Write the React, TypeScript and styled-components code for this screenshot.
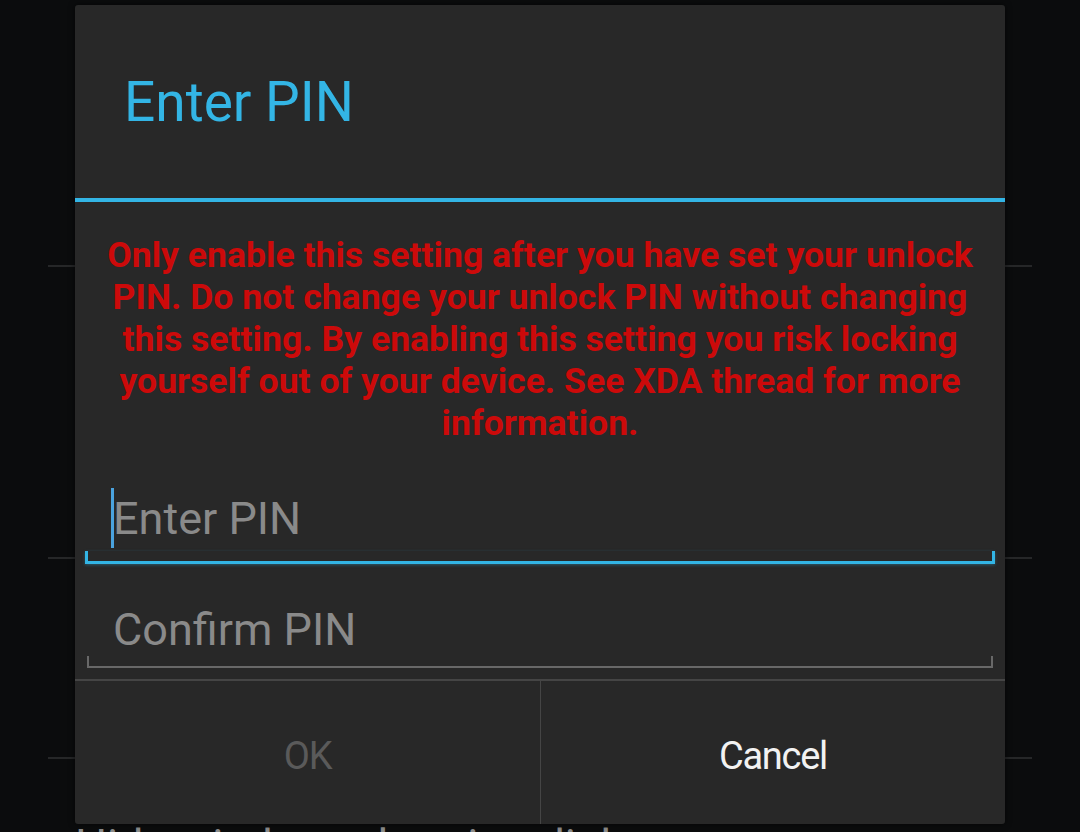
import styled, { createGlobalStyle } from 'styled-components'

const GlobalStyle = createGlobalStyle`
  html, body {
    margin: 0;
    padding: 0;
    background: #0b0c0d;
  }
  body {
    font-family: Roboto, 'Noto Sans', 'Liberation Sans', sans-serif;
  }
`

const HOLO_BLUE = '#33b5e5'

const Screen = styled.div`
  position: relative;
  width: 1080px;
  height: 832px;
  overflow: hidden;
  background: #0b0c0d;
`

const SettingsList = styled.div`
  display: flex;
  flex-direction: column;
  padding: 0 48px;
`

const SettingsRow = styled.div<{ $height: number }>`
  height: ${(p) => p.$height}px;
  border-bottom: 2px solid #262728;
  box-sizing: border-box;
`

const SettingsLabel = styled.div`
  padding: 60px 0 0 27px;
  font-size: 45px;
  color: #8c8c8c;
  white-space: nowrap;
`

const Dialog = styled.div`
  position: absolute;
  top: 5px;
  left: 75px;
  width: 930px;
  height: 819px;
  display: flex;
  flex-direction: column;
  background: #282828;
  border-radius: 3px;
  box-shadow: 0 0 6px rgba(0, 0, 0, 0.6);
`

const TitleBar = styled.div`
  height: 197px;
  display: flex;
  align-items: center;
  padding: 0 0 0 49px;
  border-bottom: 4px solid ${HOLO_BLUE};
  box-sizing: border-box;
  flex-shrink: 0;
`

const Title = styled.h1`
  margin: 0;
  font-size: 55px;
  font-weight: 400;
  color: ${HOLO_BLUE};
`

const Warning = styled.p`
  margin: 32px 0 0;
  padding: 0;
  text-align: center;
  font-size: 35.6px;
  line-height: 42px;
  font-weight: 700;
  color: #cc0a0a;
  white-space: nowrap;
`

const Fields = styled.div`
  display: flex;
  flex-direction: column;
  margin-top: 44px;
  padding: 0 10px;
`

const Field = styled.div<{ $focused?: boolean }>`
  position: relative;
  height: ${(p) => (p.$focused ? 76 : 110)}px;
  display: flex;
  align-items: ${(p) => (p.$focused ? 'flex-start' : 'center')};
  padding: ${(p) => (p.$focused ? '0 0 0 26px' : '20px 0 0 28px')};
  box-sizing: border-box;
  font-size: 45px;
  color: #8a8a8a;

  &::after {
    content: '';
    position: absolute;
    left: ${(p) => (p.$focused ? 0 : 2)}px;
    right: ${(p) => (p.$focused ? 0 : 2)}px;
    bottom: ${(p) => (p.$focused ? 0 : 6)}px;
    height: 10px;
    border: ${(p) => (p.$focused ? `3px solid ${HOLO_BLUE}` : '2px solid #686868')};
    border-top: none;
    box-shadow: ${(p) => (p.$focused ? '0 1px 3px rgba(51,181,229,0.35)' : 'none')};
  }
`

const Cursor = styled.span`
  display: inline-block;
  width: 3px;
  height: 60px;
  margin-right: -1px;
  background: #4aa3df;
`

const FieldText = styled.span`
  line-height: 60px;
  margin-top: 1px;
`

const ButtonBar = styled.div`
  margin-top: auto;
  height: 143px;
  display: grid;
  grid-template-columns: 1fr 1fr;
  border-top: 2px solid #454545;
`

const DialogButton = styled.button<{ $disabled?: boolean }>`
  border: none;
  background: transparent;
  font-family: Roboto, 'Noto Sans', 'Liberation Sans', sans-serif;
  font-size: 38px;
  letter-spacing: -1.3px;
  color: ${(p) => (p.$disabled ? '#5a5a5a' : '#f2f2f2')};
  padding: 6px 0 0;

  & + & {
    border-left: 1px solid #454545;
  }
`

export default function App() {
  return (
    <Screen>
      <GlobalStyle />
      <SettingsList>
        <SettingsRow $height={267} />
        <SettingsRow $height={292} />
        <SettingsRow $height={200} />
        <SettingsLabel>Hide wireless charging dialog</SettingsLabel>
      </SettingsList>

      <Dialog>
        <TitleBar>
          <Title>Enter PIN</Title>
        </TitleBar>
        <Warning>
          Only enable this setting after you have set your unlock
          <br />
          PIN. Do not change your unlock PIN without changing
          <br />
          this setting. By enabling this setting you risk locking
          <br />
          yourself out of your device. See XDA thread for more
          <br />
          information.
        </Warning>
        <Fields>
          <Field $focused>
            <Cursor />
            <FieldText>Enter PIN</FieldText>
          </Field>
          <Field>Confirm PIN</Field>
        </Fields>
        <ButtonBar>
          <DialogButton $disabled>OK</DialogButton>
          <DialogButton>Cancel</DialogButton>
        </ButtonBar>
      </Dialog>
    </Screen>
  )
}
